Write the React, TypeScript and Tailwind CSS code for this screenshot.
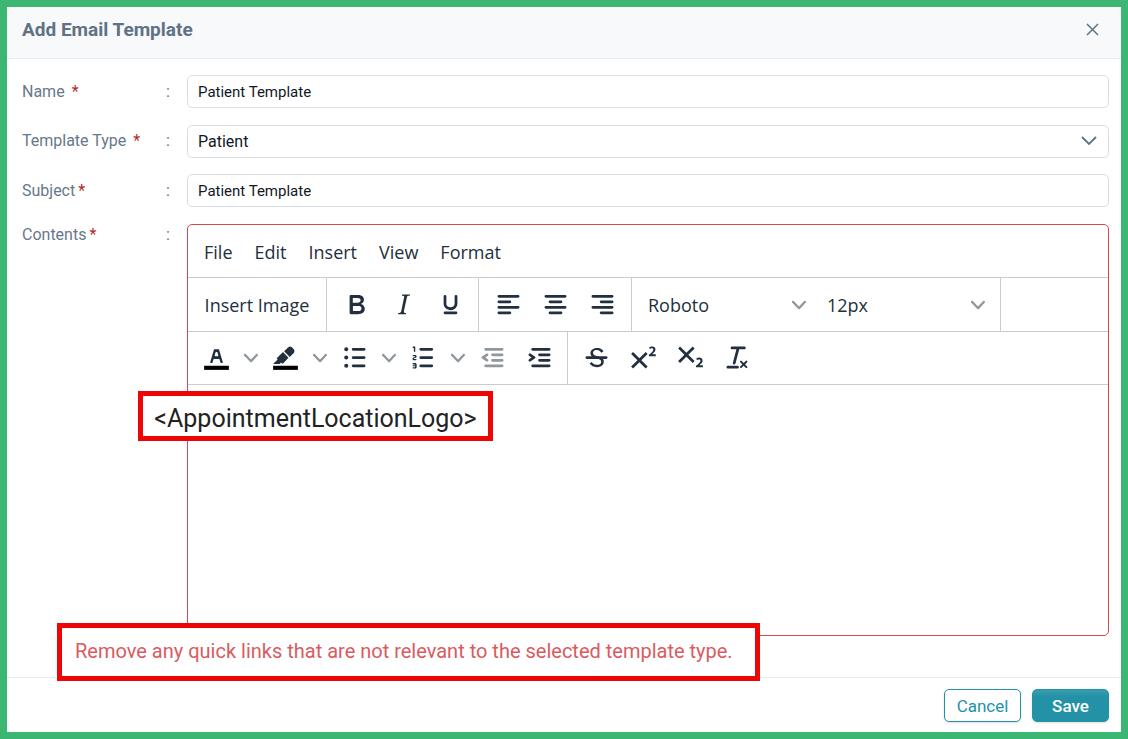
import type { ReactNode } from "react";

const ICONS = {
  bold: "M7.8 19c-.3 0-.5 0-.6-.2l-.2-.5V5.7c0-.2 0-.4.2-.5l.6-.2h5c1.5 0 2.7.3 3.5 1 .7.6 1.1 1.4 1.1 2.5a3 3 0 0 1-.6 1.9c-.4.6-1 1-1.6 1.2.4.1.9.3 1.3.6s.8.7 1 1.2c.4.4.5 1 .5 1.6 0 1.3-.4 2.3-1.3 3-.8.7-2.1 1-3.8 1H7.8zm5-8.3c.6 0 1.2-.1 1.6-.5.4-.3.6-.7.6-1.3 0-1.1-.8-1.7-2.3-1.7H9.3v3.5h3.4zm.5 6c.7 0 1.3-.1 1.7-.4.4-.4.6-.9.6-1.5s-.2-1-.7-1.4c-.4-.3-1-.4-2-.4H9.4v3.8h4z",
  italic:
    "M16.7 4.7l-.1.9h-.3c-.6 0-1 0-1.4.3-.3.3-.4.6-.5 1.1l-2.1 9.8v.6c0 .5.4.8 1.4.8h.2l-.2.8H8l.2-.8h.2c1.1 0 1.8-.5 2-1.5l2-9.8.1-.5c0-.6-.4-.8-1.4-.8h-.3l.2-.9h5.8z",
  underline:
    "M16 5c.6 0 1 .4 1 1v5.5a4 4 0 0 1-.4 1.8l-1 1.4a5.3 5.3 0 0 1-5.5 1 5 5 0 0 1-1.6-1c-.5-.4-.8-.9-1.1-1.4a4 4 0 0 1-.4-1.8V6c0-.6.4-1 1-1s1 .4 1 1v5.5c0 .3 0 .6.2 1l.6.7a3.3 3.3 0 0 0 2.2.8 3.4 3.4 0 0 0 2.2-.8c.3-.2.4-.5.6-.8l.2-.9V6c0-.6.4-1 1-1zM8 17h8c.6 0 1 .4 1 1s-.4 1-1 1H8a1 1 0 0 1 0-2z",
  alignLeft:
    "M5 5h14c.6 0 1 .4 1 1s-.4 1-1 1H5a1 1 0 1 1 0-2zm0 4h8c.6 0 1 .4 1 1s-.4 1-1 1H5a1 1 0 1 1 0-2zm0 8h8c.6 0 1 .4 1 1s-.4 1-1 1H5a1 1 0 0 1 0-2zm0-4h14c.6 0 1 .4 1 1s-.4 1-1 1H5a1 1 0 0 1 0-2z",
  alignCenter:
    "M5 5h14c.6 0 1 .4 1 1s-.4 1-1 1H5a1 1 0 1 1 0-2zm3 4h8c.6 0 1 .4 1 1s-.4 1-1 1H8a1 1 0 1 1 0-2zm0 8h8c.6 0 1 .4 1 1s-.4 1-1 1H8a1 1 0 0 1 0-2zm-3-4h14c.6 0 1 .4 1 1s-.4 1-1 1H5a1 1 0 0 1 0-2z",
  alignRight:
    "M5 5h14c.6 0 1 .4 1 1s-.4 1-1 1H5a1 1 0 1 1 0-2zm6 4h8c.6 0 1 .4 1 1s-.4 1-1 1h-8a1 1 0 0 1 0-2zm0 8h8c.6 0 1 .4 1 1s-.4 1-1 1h-8a1 1 0 0 1 0-2zm-6-4h14c.6 0 1 .4 1 1s-.4 1-1 1H5a1 1 0 0 1 0-2z",
  textColor:
    "M8.7 16h-.8a.5.5 0 0 1-.5-.6l2.7-9c.1-.3.3-.4.5-.4h2.8c.2 0 .4.1.5.4l2.7 9a.5.5 0 0 1-.5.6h-.8a.5.5 0 0 1-.4-.4l-.7-2.2c0-.3-.3-.4-.5-.4h-3.4c-.2 0-.4.1-.5.4l-.7 2.2c0 .3-.2.4-.4.4zm2.6-7.6l-.6 2a.5.5 0 0 0 .5.6h1.6a.5.5 0 0 0 .5-.6l-.6-2c0-.3-.3-.4-.5-.4h-.4c-.2 0-.4.1-.5.4z",
  highlight:
    "M7.7 16.7H3l3.3-3.3-.7-.8L10.2 8l4 4.1-4 4.2c-.2.2-.6.2-.8 0l-.6-.7-1.1 1.1zm5-7.5L11 7.4l3-2.9a2 2 0 0 1 2.6 0L18 6c.7.7.7 2 0 2.7l-2.9 2.9-1.8-1.8-.5-.6",
  bullets:
    "M11 5h8c.6 0 1 .4 1 1s-.4 1-1 1h-8a1 1 0 0 1 0-2zm0 6h8c.6 0 1 .4 1 1s-.4 1-1 1h-8a1 1 0 0 1 0-2zm0 6h8c.6 0 1 .4 1 1s-.4 1-1 1h-8a1 1 0 0 1 0-2zM4.5 6a1.5 1.5 0 1 1 3 0 1.5 1.5 0 0 1-3 0zm0 6a1.5 1.5 0 1 1 3 0 1.5 1.5 0 0 1-3 0zm0 6a1.5 1.5 0 1 1 3 0 1.5 1.5 0 0 1-3 0z",
  numbers:
    "M10 17h8c.6 0 1 .4 1 1s-.4 1-1 1h-8a1 1 0 0 1 0-2zm0-6h8c.6 0 1 .4 1 1s-.4 1-1 1h-8a1 1 0 0 1 0-2zm0-6h8c.6 0 1 .4 1 1s-.4 1-1 1h-8a1 1 0 1 1 0-2zM6 4v3.5c0 .3-.2.5-.5.5a.5.5 0 0 1-.5-.5V5h-.5a.5.5 0 0 1 0-1H6zm-1 8.8l.2.2h1.3c.3 0 .5.2.5.5s-.2.5-.5.5H4.9a1 1 0 0 1-.9-1V13c0-.4.3-.8.6-1l1.2-.4.2-.3a.2.2 0 0 0-.2-.2H4.5a.5.5 0 0 1-.5-.5c0-.3.2-.5.5-.5h1.6c.5 0 .9.4.9 1v.1c0 .4-.3.8-.6 1l-1.2.4-.2.3zM7 17v2c0 .6-.4 1-1 1H4.5a.5.5 0 0 1 0-1h1.2c.2 0 .3-.1.3-.3 0-.2-.1-.3-.3-.3H4.4a.4.4 0 1 1 0-.8h1.3c.2 0 .3-.1.3-.3 0-.2-.1-.3-.3-.3H4.5a.5.5 0 1 1 0-1H6c.6 0 1 .4 1 1z",
  outdent:
    "M7 5h12c.6 0 1 .4 1 1s-.4 1-1 1H7a1 1 0 1 1 0-2zm5 4h7c.6 0 1 .4 1 1s-.4 1-1 1h-7a1 1 0 0 1 0-2zm0 4h7c.6 0 1 .4 1 1s-.4 1-1 1h-7a1 1 0 0 1 0-2zm-5 4h12a1 1 0 0 1 0 2H7a1 1 0 0 1 0-2zm1.6-3.8a1 1 0 0 1-1.2 1.6l-3-2a1 1 0 0 1 0-1.6l3-2a1 1 0 0 1 1.2 1.6L6.8 12l1.8 1.2z",
  indent:
    "M7 5h12c.6 0 1 .4 1 1s-.4 1-1 1H7a1 1 0 1 1 0-2zm5 4h7c.6 0 1 .4 1 1s-.4 1-1 1h-7a1 1 0 0 1 0-2zm0 4h7c.6 0 1 .4 1 1s-.4 1-1 1h-7a1 1 0 0 1 0-2zm-5 4h12a1 1 0 0 1 0 2H7a1 1 0 0 1 0-2zm-2.6-3.8L6.2 12l-1.8-1.2a1 1 0 0 1 1.2-1.6l3 2a1 1 0 0 1 0 1.6l-3 2a1 1 0 1 1-1.2-1.6z",
  strike:
    "M15.6 8.5c-.5-.7-1-1.1-1.3-1.3-.6-.4-1.3-.6-2-.6-2.7 0-2.8 1.7-2.8 2.1 0 1.6 1.8 2 3.2 2.3 4.4.9 4.6 2.8 4.6 3.9 0 1.4-.7 4.1-5 4.1A6.2 6.2 0 0 1 7 16.4l1.5-1.1c.4.6 1.6 2 3.7 2 1.6 0 2.5-.4 3-1.2.4-.8.3-2-.8-2.6-.7-.4-1.6-.7-2.9-1-1-.2-3.9-.8-3.9-3.6C7.6 6 10.3 5 12.4 5c2.9 0 4.2 1.6 4.7 2.4l-1.5 1.1z",
  superscript:
    "M15 9.4L10.4 14l4.6 4.6-1.4 1.4L9 15.4 4.4 20 3 18.6 7.6 14 3 9.4 4.4 8 9 12.6 13.6 8 15 9.4zm5.9 1.6h-5v-1l1-.8 1.7-1.6c.3-.5.5-.9.5-1.3 0-.3 0-.5-.2-.7-.2-.2-.5-.3-.9-.3l-.8.2-.7.4-.4-1.2c.2-.2.5-.4 1-.5.3-.2.8-.2 1.2-.2.8 0 1.4.2 1.8.6.4.4.6 1 .6 1.6 0 .5-.2 1-.5 1.5l-1.3 1.4-.6.5h2.6V11z",
  subscript:
    "M10.4 10l4.6 4.6-1.4 1.4L9 11.4 4.4 16 3 14.6 7.6 10 3 5.4 4.4 4 9 8.6 13.6 4 15 5.4 10.4 10zM21 19h-5v-1l1-.8 1.7-1.6c.3-.4.5-.8.5-1.2 0-.3 0-.6-.2-.7-.2-.2-.5-.3-.9-.3a2 2 0 0 0-.8.2l-.7.3-.4-1.1 1-.6 1.2-.2c.8 0 1.4.3 1.8.7.4.4.6.9.6 1.5s-.2 1.1-.5 1.6a8 8 0 0 1-1.3 1.3l-.6.6h2.6V19z",
  clear:
    "M13.2 6a1 1 0 0 1 0 .2l-2.6 10a1 1 0 0 1-1 .8h-.2a.8.8 0 0 1-.8-1l2.6-10H8a1 1 0 1 1 0-2h9a1 1 0 0 1 0 2h-3.8zM5 18h7a1 1 0 0 1 0 2H5a1 1 0 0 1 0-2zm13 1.5L16.5 18 15 19.5a.7.7 0 0 1-1-1l1.5-1.5-1.5-1.5a.7.7 0 0 1 1-1l1.5 1.5 1.5-1.5a.7.7 0 0 1 1 1L17.5 17l1.5 1.5a.7.7 0 0 1-1 1z",
};

type IconName = keyof typeof ICONS;

function Icon({ name }: { name: IconName }) {
  const swatch = name === "textColor" || name === "highlight";
  return (
    <svg viewBox="0 0 24 24" className="size-[33px] shrink-0" fill="currentColor" aria-hidden="true">
      {swatch && <path d="M3 18h18v3H3z" fill="#000" />}
      {name === "strike" && <path d="M5 11h14a1 1 0 0 1 0 2H5a1 1 0 0 1 0-2z" />}
      <path d={ICONS[name]} fillRule={name === "bold" ? "evenodd" : "nonzero"} />
    </svg>
  );
}

function Chevron() {
  return (
    <svg viewBox="0 0 10 10" className="size-[14px] shrink-0 text-[#90979f]" fill="currentColor" aria-hidden="true">
      <path d="M8.7 2.2c.3-.3.8-.3 1 0 .4.4.4.9 0 1.2L5.7 7.8c-.3.3-.9.3-1.2 0L.2 3.4a.8.8 0 0 1 0-1.2c.3-.3.8-.3 1.1 0L5 6l3.7-3.8z" />
    </svg>
  );
}

function Tool({ name, label, disabled }: { name: IconName; label: string; disabled?: boolean }) {
  return (
    <button
      type="button"
      aria-label={label}
      disabled={disabled}
      className="flex h-full w-[47px] items-center justify-center disabled:text-[#90979f]"
    >
      <Icon name={name} />
    </button>
  );
}

function SplitTool({ name, label }: { name: IconName; label: string }) {
  return (
    <div className="flex">
      <Tool name={name} label={label} />
      <button type="button" aria-label={`${label} options`} className="flex w-[22px] items-center justify-center">
        <Chevron />
      </button>
    </div>
  );
}

function ToolSelect({ label, value }: { label: string; value: string }) {
  return (
    <div className="relative flex w-[179px] items-center">
      <select aria-label={label} defaultValue={value} className="h-full w-full appearance-none bg-transparent pl-[11px] outline-none">
        <option>{value}</option>
      </select>
      <span className="pointer-events-none absolute right-[10px]">
        <Chevron />
      </span>
    </div>
  );
}

function Row({ label, id, spaced, top, children }: { label: string; id: string; spaced?: boolean; top?: boolean; children: ReactNode }) {
  return (
    <div className={top ? "flex flex-1 items-stretch leading-[22px]" : "flex items-center leading-[22px]"}>
      <label htmlFor={id} className={spaced ? "flex w-[144px] shrink-0 gap-[7px]" : "flex w-[144px] shrink-0 gap-[3px]"}>
        <span>{label}</span>
        <span className="text-[#b52a2a]">*</span>
      </label>
      <span className="w-[21px] shrink-0">:</span>
      {children}
    </div>
  );
}

const FIELD = "w-full rounded-[5px] border border-[#d8dee6] bg-white px-[10px] text-[#12181f] outline-none";

export default function App() {
  return (
    <div className="flex min-h-screen flex-col border-[7px] border-[#3bb673] bg-white font-['Roboto',sans-serif] text-[17px] leading-6 text-[#67788a]">
      <header className="flex h-[52px] items-center justify-between border-b border-[#e9ecef] bg-[#f7f9fb] pr-[22px] pb-[6px] pl-[15px]">
        <h1 className="text-[19px] font-bold text-[#5f7286]">Add Email Template</h1>
        <button type="button" aria-label="Close">
          <svg viewBox="0 0 13 13" className="size-[13px]" stroke="#5f7286" strokeWidth="1.5" aria-hidden="true">
            <path d="M1 1l11 11M12 1L1 12" />
          </svg>
        </button>
      </header>

      <form className="flex flex-1 flex-col">
        <main className="relative flex flex-1 flex-col gap-[17px] pt-4 pr-3 pb-[41px] pl-[15px] text-[16px]">
          <Row label="Name" id="name" spaced>
            <input id="name" defaultValue="Patient Template" className={`${FIELD} h-[33px] text-[15px]`} />
          </Row>
          <Row label="Template Type" id="type" spaced>
            <div className="relative h-8 w-full">
              <select id="type" defaultValue="Patient" className={`${FIELD} h-[33px] appearance-none`}>
                <option>Patient</option>
              </select>
              <svg
                viewBox="0 0 16 10"
                className="pointer-events-none absolute top-[11px] right-3 h-[10px] w-4"
                fill="none"
                stroke="#5f7286"
                strokeWidth="1.8"
                aria-hidden="true"
              >
                <path d="M1 1l7 7 7-7" />
              </svg>
            </div>
          </Row>
          <Row label="Subject" id="subject">
            <input id="subject" defaultValue="Patient Template" className={`${FIELD} h-[33px] text-[15px]`} />
          </Row>
          <Row label="Contents" id="contents" top>
            <div className="relative flex flex-1 flex-col rounded-[5px] border border-[#d04a4e] font-['Open_Sans',sans-serif] text-[18px] text-[#222f3e]">
              <div className="flex h-[53px] items-center gap-[22px] border-b border-[#ccc] px-4 pt-[2px]">
                {["File", "Edit", "Insert", "View", "Format"].map((item) => (
                  <button key={item} type="button">
                    {item}
                  </button>
                ))}
              </div>
              <div className="flex h-[54px] border-b border-[#ccc]">
                <button type="button" className="w-[139px] border-r border-[#ccc] whitespace-nowrap">
                  Insert Image
                </button>
                <div className="flex border-r border-[#ccc] pr-1 pl-[6px]">
                  <Tool name="bold" label="Bold" />
                  <Tool name="italic" label="Italic" />
                  <Tool name="underline" label="Underline" />
                </div>
                <div className="flex border-r border-[#ccc] pr-[5px] pl-[6px]">
                  <Tool name="alignLeft" label="Align left" />
                  <Tool name="alignCenter" label="Align center" />
                  <Tool name="alignRight" label="Align right" />
                </div>
                <div className="flex border-r border-[#ccc] px-[5px]">
                  <ToolSelect label="Font family" value="Roboto" />
                  <ToolSelect label="Font size" value="12px" />
                </div>
              </div>
              <div className="flex h-[53px] border-b border-[#ccc] pb-px">
                <div className="-mb-px flex border-r border-[#ccc] pr-1 pb-px pl-[5px]">
                  <SplitTool name="textColor" label="Text color" />
                  <SplitTool name="highlight" label="Background color" />
                  <SplitTool name="bullets" label="Bullet list" />
                  <SplitTool name="numbers" label="Numbered list" />
                  <Tool name="outdent" label="Decrease indent" disabled />
                  <Tool name="indent" label="Increase indent" />
                </div>
                <div className="flex px-[5px]">
                  <Tool name="strike" label="Strikethrough" />
                  <Tool name="superscript" label="Superscript" />
                  <Tool name="subscript" label="Subscript" />
                  <Tool name="clear" label="Clear formatting" />
                </div>
              </div>
              <textarea id="contents" className="w-full flex-1 resize-none rounded-[5px] p-4 outline-none" />
              <p className="absolute top-[166px] -left-[50px] flex h-[50px] w-[355px] items-center justify-center border-5 border-[#ee0505] bg-white pt-[6px] font-['Roboto',sans-serif] text-[25px] whitespace-nowrap text-[#222]">
                &lt;AppointmentLocationLogo&gt;
              </p>
            </div>
          </Row>
          <p className="absolute -bottom-1 left-[50px] flex h-[58px] w-[703px] items-center border-5 border-[#ee0505] bg-white pb-[2px] pl-[13px] text-[20px] whitespace-nowrap text-[#d95b5f]">
            Remove any quick links that are not relevant to the selected template type.
          </p>
        </main>

        <footer className="flex justify-end gap-[11px] border-t border-[#e9ecef] pt-[11px] pr-3 pb-[10px]">
          <button type="button" className="h-[33px] w-[77px] rounded-[5px] border border-[#2492a6] bg-white text-[#2492a6] shadow-sm">
            Cancel
          </button>
          <button
            type="submit"
            className="h-[33px] w-[77px] rounded-[5px] border border-[#2492a6] bg-linear-to-b from-[#3a9db0] to-[#2492a6] to-20% font-medium text-white shadow-sm"
          >
            Save
          </button>
        </footer>
      </form>
    </div>
  );
}
